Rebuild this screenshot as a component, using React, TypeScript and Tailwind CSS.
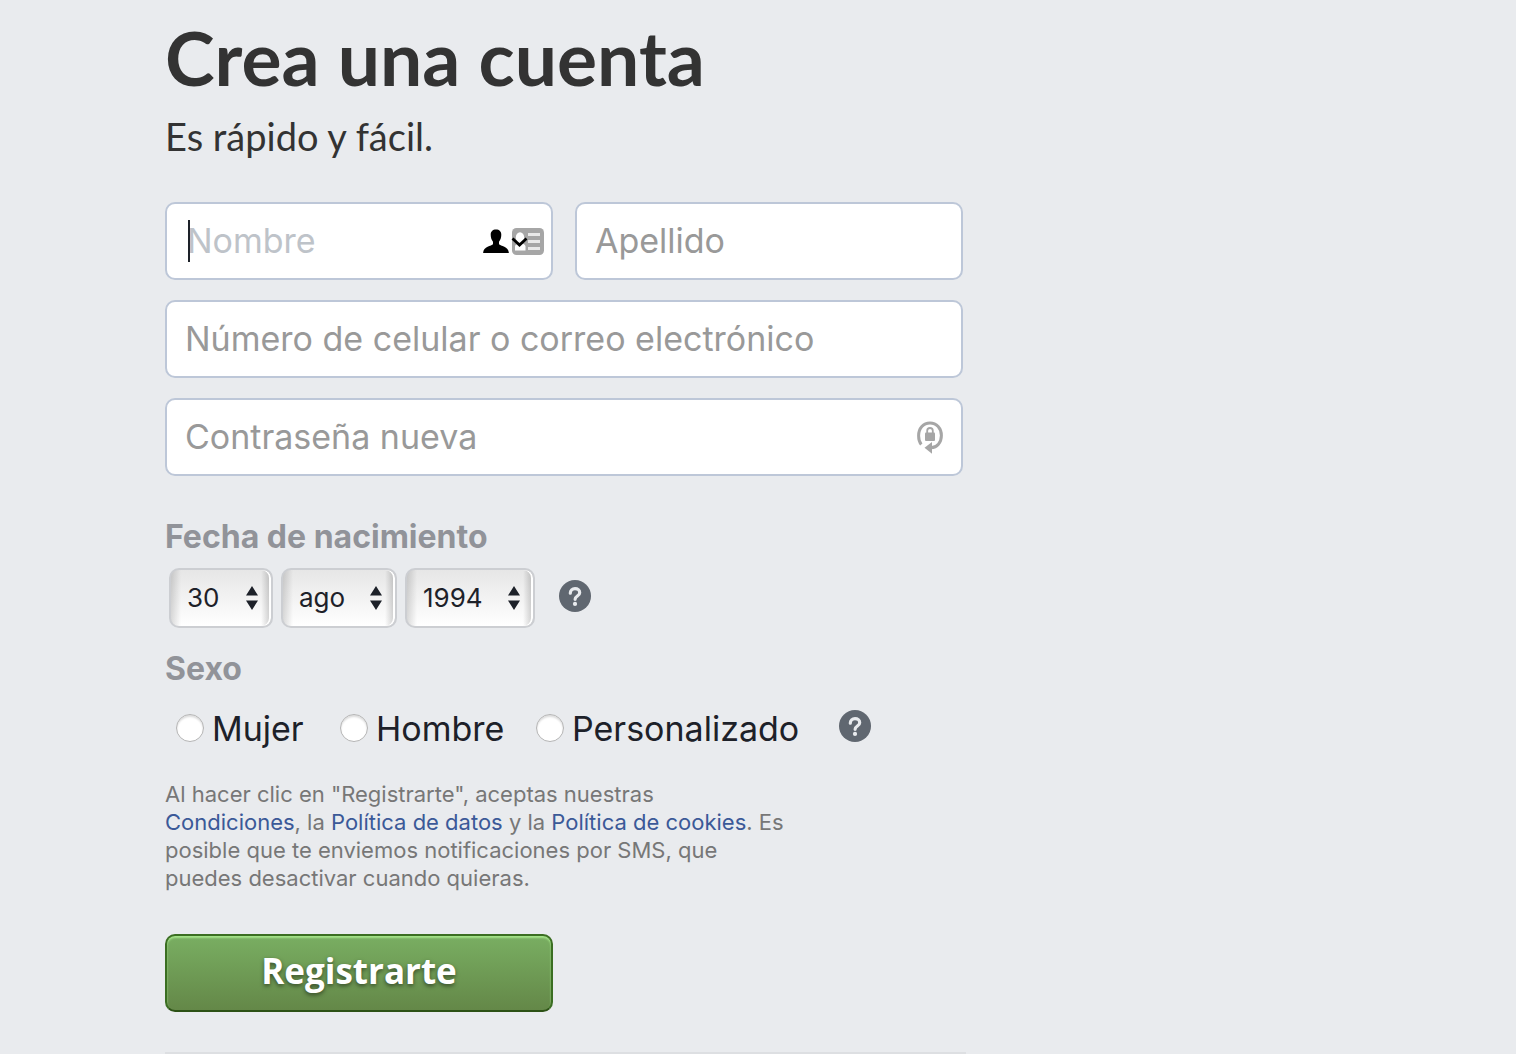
import type { ReactNode } from 'react';

const FIELD =
	'h-[78px] w-full rounded-[10px] border-2 border-[#bdc7d8] bg-white px-[18px] pb-0.5 text-[34px] text-[#1d2129] outline-none placeholder:text-[#999999] placeholder:opacity-100';

const birthday = [
	{ label: 'Día', value: '30', width: 'w-[104px]' },
	{ label: 'Mes', value: 'ago', width: 'w-[116px]' },
	{ label: 'Año', value: '1994', width: 'w-[130px]' },
];

const genders = [
	{ id: 'mujer', name: 'Mujer', width: 'w-[164px]' },
	{ id: 'hombre', name: 'Hombre', width: 'w-[196px]' },
	{ id: 'personalizado', name: 'Personalizado', width: 'w-[303px]' },
];

function HelpButton({ label }: { label: string }) {
	return (
		<button type="button" aria-label={label} className="-mt-1 size-8 shrink-0">
			<svg viewBox="0 0 32 32" className="size-8" fill="none">
				<circle cx="16" cy="16" r="16" fill="#606770" />
				<path
					d="M11.3 13.2c0-2.8 2-4.500 4.700-4.500s4.700 1.600 4.700 4c0 3.400-4.600 3.200-4.600 6.600"
					stroke="#e9ebee"
					strokeWidth="3.2"
					strokeLinecap="round"
				/>
				<circle cx="16" cy="23.9" r="2.100" fill="#e9ebee" />
			</svg>
		</button>
	);
}

function PolicyLink({ children }: { children: ReactNode }) {
	return (
		<a href="#" className="text-[#3b5998]">
			{children}
		</a>
	);
}

function ContactIcons() {
	return (
		<svg viewBox="0 0 62 28" className="h-7 w-[62px]" fill="none">
			{/* Person */}
			<path
				d="M14 1.500c3.400 0 5.300 2 5.300 5.300 0 2.900-.9 5.400-2.300 6.900v2.600c1.400 1.800 9.600 2.200 9.900 8.700H1.100c.3-6.500 8.500-6.900 9.900-8.700v-2.600C9.600 12.200 8.700 9.700 8.700 6.800c0-3.300 1.900-5.300 5.300-5.300z"
				fill="#000"
			/>
			{/* Card */}
			<rect x="30" y="0" width="32" height="27" rx="4.500" fill="#a6a6a6" />
			<path d="M33 22.500v-4c0-2 3-3 5-3.500h1c2 .5 4.500 1.500 4.500 3.500v4z" fill="#fff" />
			<ellipse cx="38" cy="9.500" rx="4.200" ry="5.200" fill="#fff" />
			<path d="M46 6.500h12M46 13.500h12M46 20.500h12" stroke="#e9e9e9" strokeWidth="3" />
			<path d="M30.500 10.500l7 6.500 7-6.500" stroke="#000" strokeWidth="2.800" />
		</svg>
	);
}

function LockIcon() {
	return (
		<svg viewBox="0 0 28 34" className="h-[34px] w-7" fill="none">
			<path
				d="M5.300 24.500C3.500 22.500 2.600 19.500 2.600 15.800 2.600 8.300 7.400 3 14 3s11.400 5.300 11.400 12.500c0 7-4.400 12-10.400 12.300"
				stroke="#a6a6a6"
				strokeWidth="3"
			/>
			<path d="M8.500 27.800l7.500-5.800v11.700z" fill="#a6a6a6" />
			<rect x="9" y="12.500" width="10" height="8.500" rx="1" fill="#a6a6a6" />
			<path d="M11.200 13v-2.200a2.800 2.800 0 0 1 5.600 0V13" stroke="#a6a6a6" strokeWidth="1.800" />
		</svg>
	);
}

export default function App() {
	return (
		<main className="min-h-screen bg-[#e9ebee] pl-[165px] font-['Inter','Liberation_Sans',sans-serif] text-[#1d2129]">
			<form className="flex w-full max-w-[801px] flex-col pt-5" onSubmit={(e) => e.preventDefault()}>
				<h1 className="font-['Lato','Open_Sans',sans-serif] text-[75px] leading-[74px] font-bold whitespace-nowrap text-[#333333]">
					Crea una cuenta
				</h1>
				<p className="mt-[17px] font-['Lato','Open_Sans',sans-serif] text-[38px] leading-[50px] text-[#333333]">
					Es rápido y fácil.
				</p>

				<div className="mt-[41px] mr-[3px] flex flex-col gap-5">
					<div className="grid grid-cols-2 gap-[22px]">
						<div className="relative">
							<input
								type="text"
								aria-label="Nombre"
								placeholder="Nombre"
								className={`${FIELD} pl-5 placeholder:text-[#bec3c9]`}
							/>
							<span className="absolute top-[18px] left-[23px] h-[42px] w-0.5 bg-[#1d2129]" />
							<span className="absolute top-[26px] right-[9px]">
								<ContactIcons />
							</span>
						</div>
						<input type="text" aria-label="Apellido" placeholder="Apellido" className={FIELD} />
					</div>
					<input
						type="text"
						aria-label="Número de celular o correo electrónico"
						placeholder="Número de celular o correo electrónico"
						className={FIELD}
					/>
					<div className="relative">
						<input
							type="password"
							aria-label="Contraseña nueva"
							placeholder="Contraseña nueva"
							className={FIELD}
						/>
						<span className="absolute top-[22px] right-[19px]">
							<LockIcon />
						</span>
					</div>
				</div>

				<h2 className="mt-10 text-[32px] leading-[42px] font-bold text-[#919399]">Fecha de nacimiento</h2>
				<div className="mt-[10px] flex items-center gap-2 pl-1">
					{birthday.map((field) => (
						<div key={field.label} className={`relative ${field.width}`}>
							<select
								aria-label={field.label}
								className="h-[60px] w-full appearance-none rounded-[10px] border-2 border-[#ccced2] bg-[linear-gradient(to_right,rgba(0,0,0,0.14),transparent_10px,transparent_calc(100%_-_10px),rgba(0,0,0,0.2)),linear-gradient(#e6e6e6,#ffffff)] pb-0.5 pl-4 text-[26px] shadow-[inset_-2px_0_0_#ffffff] outline-none">
								<option>{field.value}</option>
							</select>
							<svg
								viewBox="0 0 12 24"
								className="pointer-events-none absolute top-[18px] right-[15px] h-6 w-3"
								fill="#1d2129">
								<path d="M6 0l6 9.500H0zM6 24l6-9.500H0z" />
							</svg>
						</div>
					))}
					<div className="ml-4 flex">
						<HelpButton label="Ayuda sobre la fecha de nacimiento" />
					</div>
				</div>

				<h2 className="mt-5 text-[32px] leading-[42px] font-bold text-[#919399]">Sexo</h2>
				<div className="mt-4 flex items-center pl-[11px]">
					{genders.map((gender) => (
						<div key={gender.id} className={`flex items-center gap-2 ${gender.width}`}>
							<input
								type="radio"
								name="sexo"
								id={gender.id}
								className="size-7 shrink-0 appearance-none rounded-full border border-[#b5b5b5] bg-white shadow-[inset_0_2px_2px_#dddddd] checked:border-8 checked:border-[#385898]"
							/>
							<label htmlFor={gender.id} className="pt-0.5 text-[34px] leading-[42px]">
								{gender.name}
							</label>
						</div>
					))}
					<HelpButton label="Ayuda sobre el sexo" />
				</div>

				<p className="mt-[30px] max-w-[624px] text-[22px] leading-7 text-[#777777]">
					Al hacer clic en "Registrarte", aceptas nuestras <PolicyLink>Condiciones</PolicyLink>, la{' '}
					<PolicyLink>Política de datos</PolicyLink> y la <PolicyLink>Política de cookies</PolicyLink>. Es
					posible que te enviemos notificaciones por SMS, que puedes desactivar cuando quieras.
				</p>

				<button
					type="submit"
					className="mt-[42px] h-[78px] w-[388px] rounded-[10px] border-2 border-[#3b6e22] border-b-[#2c5115] bg-linear-to-b from-[#79ae62] to-[#648848] pb-1 font-['Open_Sans','Lato',sans-serif] text-[35px] font-bold text-white shadow-[inset_0_2px_2px_#a4e388] [text-shadow:0_2px_4px_rgba(0,0,0,0.5)]">
					Registrarte
				</button>
				<hr className="mt-10 border-t-2 border-[#dddfe2]" />
			</form>
		</main>
	);
}
